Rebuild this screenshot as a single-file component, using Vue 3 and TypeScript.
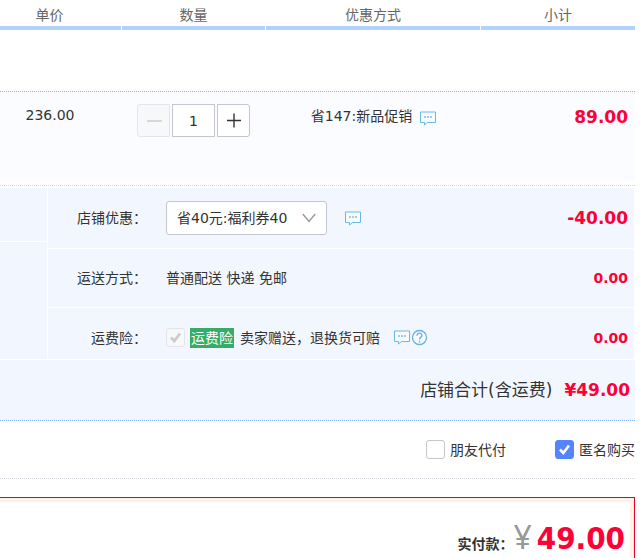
<script setup lang="ts">
import { ref } from 'vue'

const quantity = ref<number>(1)
const coupon = ref<string>('省40元:福利券40')
const insured = ref<boolean>(true)
const friendPay = ref<boolean>(false)
const anonymous = ref<boolean>(true)
</script>

<template>
  <main class="order">
    <table class="items">
      <colgroup>
        <col class="c-price" />
        <col class="c-qty" />
        <col class="c-promo" />
        <col />
      </colgroup>
      <thead>
        <tr>
          <th><div class="head head-first">单价</div></th>
          <th><div class="head">数量</div></th>
          <th><div class="head">优惠方式</div></th>
          <th class="last"><div class="head">小计</div></th>
        </tr>
      </thead>
      <tbody>
        <tr>
          <td class="spacer" colspan="4"></td>
        </tr>
        <tr class="item">
          <td class="unit">236.00</td>
          <td>
            <div class="stepper">
              <button type="button" class="step minus" aria-label="减少" disabled>
                <svg width="16" height="16" viewBox="0 0 16 16"><path d="M1 8h15" stroke="#ccc" stroke-width="1.5" /></svg>
              </button>
              <input v-model="quantity" class="count" type="text" aria-label="数量" />
              <button type="button" class="step plus" aria-label="增加" @click="quantity++">
                <svg width="16" height="16" viewBox="0 0 16 16"><path d="M1 7.500h14M8 .5v14" stroke="#333" stroke-width="1.400" /></svg>
              </button>
            </div>
          </td>
          <td>
            <div class="promo">
              <span>省147:新品促销</span>
              <svg class="bubble" width="16" height="15" viewBox="0 0 16 15"><path d="M.5 1H15.500V11.500H7.500L4.500 14V11.500H.5Z" fill="#f8fcff" stroke="#6bb6e8" /><path d="M4 6h2M7 6h2M10 6h2" stroke="#9bcdf0" stroke-width="2" /></svg>
            </div>
          </td>
          <td class="subtotal"><strong class="money">89.00</strong></td>
        </tr>
      </tbody>
    </table>

    <section class="shop">
      <div class="side"><div class="side-top"></div><div class="side-rest"></div></div>
      <div class="rows">
        <div class="row row-coupon">
          <label class="name" for="coupon">店铺优惠：</label>
          <div class="value">
            <div class="picker">
              <select id="coupon" v-model="coupon">
                <option>省40元:福利券40</option>
              </select>
              <svg class="chevron" width="14" height="10" viewBox="0 0 14 10"><path d="M.8 1L7 8.500L13.200 1" fill="none" stroke="#999" stroke-width="1.400" /></svg>
            </div>
            <svg class="bubble" width="16" height="15" viewBox="0 0 16 15"><path d="M.5 1H15.500V11.500H7.500L4.500 14V11.500H.5Z" fill="#f8fcff" stroke="#6bb6e8" /><path d="M4 6h2M7 6h2M10 6h2" stroke="#9bcdf0" stroke-width="2" /></svg>
          </div>
          <strong class="money">-40.00</strong>
        </div>
        <div class="row row-ship">
          <span class="name">运送方式：</span>
          <div class="value">普通配送 快递 免邮</div>
          <strong class="money small">0.00</strong>
        </div>
        <div class="row row-insure">
          <label class="name" for="insure">运费险：</label>
          <div class="value">
            <span class="check">
              <input id="insure" v-model="insured" type="checkbox" disabled />
              <svg width="19" height="19" viewBox="0 0 19 19"><path d="M5 9.500L8.300 13L14 5.500" fill="none" stroke="#ccc" stroke-width="2.800" /></svg>
            </span>
            <span class="tag">运费险</span>
            <span class="note">卖家赠送，退换货可赔</span>
            <span class="hints">
              <svg class="bubble" width="16" height="15" viewBox="0 0 16 15"><path d="M.5 1H15.500V11.500H7.500L4.500 14V11.500H.5Z" fill="#f8fcff" stroke="#6bb6e8" /><path d="M4 6h2M7 6h2M10 6h2" stroke="#9bcdf0" stroke-width="2" /></svg>
              <svg width="17" height="17" viewBox="0 0 17 17"><circle cx="8.500" cy="8.500" r="7" fill="#f8fcff" stroke="#5fb1e5" stroke-width="1.300" /><path d="M6 6.800C6 3.200 11 3.400 11 6.300C11 8.300 8.500 8 8.500 10.500M8.500 11.800v1.600" fill="none" stroke="#5fb1e5" stroke-width="1.300" /></svg>
            </span>
          </div>
          <strong class="money small">0.00</strong>
        </div>
      </div>
    </section>

    <div class="shop-total">
      <span>店铺合计(含运费)</span>
      <strong class="money">¥49.00</strong>
    </div>

    <div class="options">
      <label class="option">
        <span class="check"><input v-model="friendPay" type="checkbox" /></span>
        朋友代付
      </label>
      <label class="option">
        <span class="check">
          <input v-model="anonymous" type="checkbox" />
          <svg v-if="anonymous" width="19" height="19" viewBox="0 0 19 19"><path d="M5 9.500L8.300 13L14 5.500" fill="none" stroke="#fff" stroke-width="2.600" /></svg>
        </span>
        匿名购买
      </label>
    </div>

    <section class="pay">
      <div class="pay-inner">
        <span class="pay-label">实付款：</span>
        <span class="yen">¥</span>
        <strong class="amount">49.00</strong>
      </div>
    </section>
  </main>
</template>

<style>
body {
  background: #fff;
}
</style>

<style scoped>
.order {
  margin-right: 6px;
  color: #333;
  font: 14px/20px "DejaVu Sans", "Noto Sans CJK SC", sans-serif;
}
svg {
  display: block;
  flex: none;
}
.items {
  width: 100%;
  table-layout: fixed;
  border-collapse: separate;
  border-spacing: 0;
}
.c-price { width: 122px; }
.c-qty { width: 144px; }
.c-promo { width: 215px; }
th, td {
  padding: 0;
  font-weight: normal;
}
th { padding-right: 1px; }
th.last { padding-right: 0; }
.head {
  padding: 5px 0 1px;
  border-bottom: 4px solid #b2d1ff;
  color: #666;
  text-align: center;
}
.head-first { padding-right: 22px; }
.spacer {
  height: 61px;
  border-bottom: 1px dotted #80b2ff;
}
.item td {
  box-sizing: border-box;
  height: 90px;
  padding-top: 12px;
  vertical-align: top;
  background: #fbfcff;
}
.item .unit {
  padding-top: 13px;
  padding-right: 22px;
  text-align: center;
}
.stepper {
  display: flex;
  justify-content: center;
  gap: 2px;
  padding-right: 1px;
}
.step, .count {
  box-sizing: border-box;
  height: 33px;
  padding: 0;
  border: 1px solid #c3c5cf;
  background: #fff;
  color: #333;
}
.step {
  display: flex;
  align-items: center;
  justify-content: center;
  width: 33px;
}
.minus {
  border-color: #e5e5e9;
  border-radius: 3px 0 0 3px;
  background: #f7f8fa;
}
.plus { border-radius: 0 3px 3px 0; }
.count {
  width: 43px;
  font: inherit;
  text-align: center;
}
.promo {
  display: flex;
  align-items: center;
  justify-content: center;
  gap: 8px;
  padding-top: 2px;
}
.promo .bubble { margin-top: 4px; }
.item .subtotal {
  padding-top: 15px;
  padding-right: 7px;
  text-align: right;
}
.money {
  color: #ff0036;
  font-size: 17px;
}
.small { font-size: 14px; }
.shop {
  display: flex;
  gap: 1px;
  margin-top: 3px;
  padding: 2px 1px 0 0;
  border-top: 1px dotted #d2d4d9;
}
.side {
  display: flex;
  flex-direction: column;
  gap: 1px;
  width: 47px;
  padding-bottom: 1px;
}
.side-top {
  height: 53px;
  background: #f2f7ff;
}
.side-rest {
  flex: 1;
  background: #f2f7ff;
}
.rows {
  flex: 1;
}
.row {
  display: flex;
  align-items: center;
  padding-right: 6px;
  border-bottom: 1px solid #fff;
  background: #f2f7ff;
}
.row-coupon { height: 60px; }
.row-ship { height: 58px; }
.row-insure {
  height: 43px;
  padding-top: 8px;
}
.name {
  width: 99px;
  margin-right: 19px;
  text-align: right;
}
.value {
  display: flex;
  flex: 1;
  align-items: center;
}
.picker {
  display: grid;
  align-items: center;
  width: 161px;
  margin-right: 18px;
}
.picker select {
  grid-area: 1 / 1;
  width: 100%;
  height: 34px;
  padding: 0 10px;
  border: 1px solid #c3c5cf;
  border-radius: 3px;
  appearance: none;
  background: #fff;
  color: #333;
  font: inherit;
}
.chevron {
  grid-area: 1 / 1;
  justify-self: end;
  margin-right: 11px;
  pointer-events: none;
}
.check {
  display: grid;
  flex: none;
}
.check input {
  grid-area: 1 / 1;
  box-sizing: border-box;
  width: 19px;
  height: 19px;
  margin: 0;
  border: 1px solid #c3c5cf;
  border-radius: 3px;
  appearance: none;
  background: #fff;
}
.check input:checked {
  border-color: #5584ff;
  background: #5584ff;
}
.check input:disabled {
  border-color: #e3e4e8;
  background: #f7f8fa;
}
.check svg {
  grid-area: 1 / 1;
  pointer-events: none;
}
.tag {
  margin: 0 6px 0 5px;
  padding: 0 1px;
  background: #35ad68;
  color: #fff;
}
.hints {
  display: flex;
  align-items: center;
  gap: 1px;
  margin-left: 14px;
}
.shop-total {
  display: flex;
  align-items: center;
  justify-content: flex-end;
  gap: 12px;
  height: 60px;
  padding-right: 5px;
  border-bottom: 1px dotted #80b2ff;
  background: #f2f7ff;
  font-size: 17px;
}
.options {
  display: flex;
  align-items: center;
  justify-content: flex-end;
  gap: 49px;
  height: 57px;
  border-bottom: 1px dotted #d2d4d9;
}
.option {
  display: flex;
  align-items: center;
  gap: 5px;
  white-space: nowrap;
}
.pay {
  margin-top: 18px;
  border: solid #e4002b;
  border-width: 1px 1px 0 0;
}
.pay-inner {
  display: flex;
  align-items: baseline;
  justify-content: flex-end;
  padding: 15px 5px 1px 0;
  border: solid #fff0e8;
  border-width: 4px 4px 0 0;
  line-height: 40px;
}
.pay-label { font-weight: bold; }
.yen {
  margin-right: 5px;
  color: #999;
  font-family: "Noto Sans", sans-serif;
  font-size: 32px;
}
.amount {
  color: #ff0036;
  font-family: "DejaVu Sans Condensed", "DejaVu Sans", sans-serif;
  font-size: 31px;
}
</style>
